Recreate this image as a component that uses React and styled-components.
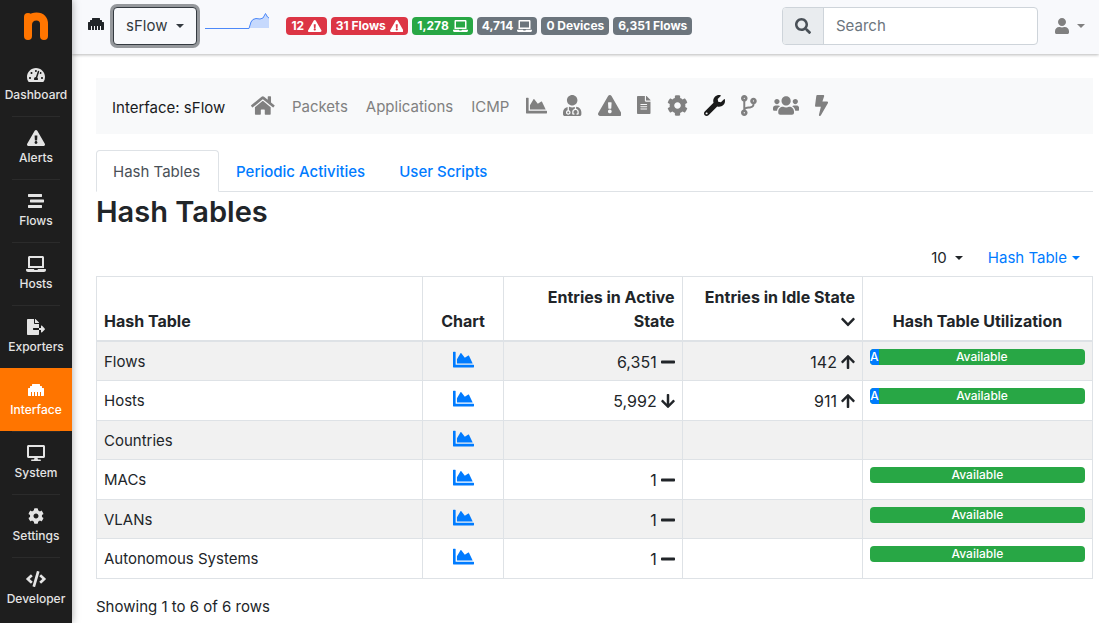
import React from "react";
import styled, { createGlobalStyle, css } from "styled-components";
import {
  FaTachometerAlt, FaExclamationTriangle, FaStream, FaLaptop, FaFileExport,
  FaEthernet, FaDesktop, FaCog, FaCode, FaHome, FaChartArea, FaUserMd,
  FaFileAlt, FaWrench, FaCodeBranch, FaUsers, FaBolt, FaSearch, FaUser,
  FaChevronDown, FaArrowUp, FaArrowDown, FaMinus,
} from "react-icons/fa";

const GlobalStyle = createGlobalStyle`
  *, *::before, *::after { box-sizing: border-box; }
  body {
    margin: 0;
    background: #fff;
    color: #212529;
    font-family: Inter, "Liberation Sans", sans-serif;
    font-size: 16px;
    line-height: 24px;
  }
  a { text-decoration: none; color: inherit; }
  button, input { font: inherit; color: inherit; }
  svg { display: block; }
`;

/* Width of each glyph's view box; all of them are 512 units high. */
const glyphUnits = new Map([
  [FaTachometerAlt, 576], [FaExclamationTriangle, 576], [FaLaptop, 640],
  [FaFileExport, 576], [FaDesktop, 576], [FaCode, 640], [FaHome, 576],
  [FaUserMd, 448], [FaFileAlt, 384], [FaCodeBranch, 384], [FaUsers, 640],
  [FaBolt, 320], [FaUser, 448], [FaChevronDown, 448], [FaArrowUp, 448],
  [FaArrowDown, 448], [FaMinus, 448],
]);

const Glyph = styled.svg`
  flex: none;
  height: ${(p) => p.$size}px;
  width: auto;
  aspect-ratio: ${(p) => p.$units} / 512;
`;

function Icon({ of, size = 16 }) {
  return <Glyph as={of} $size={size} $units={glyphUnits.get(of) || 512} />;
}

const Page = styled.div`
  display: flex;
  min-height: 100vh;
`;

const Sidebar = styled.nav`
  position: sticky;
  top: 0;
  z-index: 2;
  flex: none;
  width: 72px;
  height: 100vh;
  overflow: hidden;
  background: #1e1e1e;
  box-shadow: 0 0 8px rgba(0, 0, 0, 0.35);
`;

const Brand = styled.a`
  display: flex;
  justify-content: center;
  padding-top: 11px;
  height: 53px;
`;

const SideLink = styled.a`
  display: flex;
  flex-direction: column;
  align-items: center;
  height: 63px;
  font-size: 12px;
  line-height: 18px;
  font-weight: 500;
  color: ${(p) => (p.$active ? "#fff" : "#e4e4e4")};
  background: ${(p) => (p.$active ? "#ff7500" : "transparent")};

  &::before {
    content: "";
    width: 48px;
    height: 1px;
    margin-bottom: 13px;
    background: ${(p) => (p.$active ? "transparent" : "#2b2b2b")};
  }
  ${Brand} + &::before { background: transparent; }
  svg { margin-bottom: 3px; }
`;

const Main = styled.div`
  flex: 1;
  min-width: 0;
`;

const TopBar = styled.header`
  display: flex;
  align-items: center;
  height: 54px;
  padding: 0 14px 2px 16px;
  background: #f8f9fc;
  box-shadow: 0 1px 3px rgba(0, 0, 0, 0.28);
  > svg { flex: none; }
`;

const InterfaceMark = styled.span`
  flex: none;
  padding-bottom: 4px;
`;

const Caret = styled.span`
  display: inline-block;
  border: 4px solid transparent;
  border-top-color: currentColor;
  border-bottom: 0;
`;

const InterfaceButton = styled.button`
  display: flex;
  align-items: center;
  gap: 9px;
  height: 38px;
  margin: 0 8px 0 9px;
  padding: 0 12px;
  color: #343a40;
  background: #f8f9fc;
  border: 1px solid #343a40;
  border-radius: 4px;
  box-shadow: 0 0 0 3px #95989c;
  font-size: 15px;
`;

const Badges = styled.div`
  display: flex;
  gap: 4px;
  margin-left: 17px;
`;

const tones = { red: "#dc3545", green: "#28a745", grey: "#6c757d" };

const Badge = styled.a`
  display: flex;
  align-items: center;
  gap: 4px;
  height: 18px;
  padding: 0 5px;
  border-radius: 4px;
  font-size: 12px;
  line-height: 18px;
  font-weight: 700;
  white-space: nowrap;
  color: #fff;
  background: ${(p) => tones[p.$tone]};
`;

const SearchGroup = styled.label`
  display: flex;
  width: 256px;
  height: 38px;
  margin-left: auto;
  border: 1px solid #ced4da;
  border-radius: 4px;
  overflow: hidden;
  background: #fff;
`;

const SearchAddon = styled.span`
  display: flex;
  flex: none;
  align-items: center;
  justify-content: center;
  width: 41px;
  background: #e9ecef;
  color: #495057;
  border-right: 1px solid #ced4da;
`;

const SearchInput = styled.input`
  flex: 1;
  min-width: 0;
  padding: 0 12px;
  border: 0;
  outline: 0;
  background: transparent;
  font-size: 15px;
  &::placeholder { color: #6c757d; opacity: 1; }
`;

const UserButton = styled.button`
  display: flex;
  align-items: center;
  gap: 8px;
  margin-left: 17px;
  padding: 0;
  border: 0;
  background: none;
  color: #808080;
`;

const Content = styled.main`
  padding: 24px 6px 0 24px;
  font-size: 15px;
`;

const InterfaceNav = styled.nav`
  display: flex;
  align-items: center;
  gap: 16px;
  height: 56px;
  padding: 0 16px 2px;
  background: #f8f9fa;
`;

const NavTitle = styled.span`
  padding-top: 6px;
  margin-right: 10px;
  color: #1a1c1e;
  white-space: nowrap;
`;

const NavItem = styled.a`
  color: ${(p) => (p.$active ? "#1a1a1a" : "#808080")};
`;

const NavLabel = styled(NavItem)`
  padding: 3px 1px 0;
`;

const Tabs = styled.div`
  display: flex;
  margin-top: 16px;
  border-bottom: 1px solid #dee2e6;
`;

const Tab = styled.a`
  height: 42px;
  margin-bottom: -1px;
  padding: 9px 16px 7px;
  border: 1px solid transparent;
  border-radius: 4px 4px 0 0;
  color: #007bff;
  font-weight: 500;
  ${(p) =>
    p.$active &&
    css`
      padding-right: 18px;
      color: #495057;
      font-weight: 400;
      background: #fff;
      border-color: #dee2e6 #dee2e6 #fff;
    `}
`;

const Title = styled.h2`
  margin: 0;
  font-size: 29px;
  line-height: 40px;
  font-weight: 600;
`;

const TableTools = styled.div`
  display: flex;
  justify-content: flex-end;
  gap: 25px;
  margin: 14px 0 6px;
  padding-right: 13px;
`;

const ToolButton = styled.button`
  display: flex;
  align-items: center;
  gap: ${(p) => (p.$link ? "5px" : "8px")};
  padding: 0;
  border: 0;
  background: none;
  color: ${(p) => (p.$link ? "#007bff" : "#212529")};
`;

const Table = styled.table`
  width: 100%;
  table-layout: fixed;
  border-collapse: collapse;
  border: 1px solid #dee2e6;
`;

const Col = styled.col`
  width: ${(p) => p.$share}%;
`;

const Head = styled.th`
  padding: 8px 7px 7px;
  border: 1px solid #dee2e6;
  border-bottom-width: 2px;
  vertical-align: bottom;
  font-size: 16px;
  font-weight: 700;
  text-align: ${(p) => p.$align || "left"};
  svg {
    display: inline-block;
    vertical-align: -3px;
  }
`;

const Row = styled.tr`
  height: 39px;
  &:nth-child(odd) { background: #f1f1f1; }
  &:nth-child(even) { height: 40px; }
`;

const Cell = styled.td`
  padding: 8px 7px 6px;
  border: 1px solid #dee2e6;
  vertical-align: top;
`;

const GraphicCell = styled(Cell)`
  padding: 7px;
`;

const ChartLink = styled.a`
  display: flex;
  justify-content: center;
  color: #007bff;
`;

const Count = styled.span`
  display: flex;
  justify-content: flex-end;
  align-items: center;
  gap: 4px;
  font-size: 16px;
`;

const Progress = styled.div`
  display: flex;
  height: 16px;
  border-radius: 4px;
  overflow: hidden;
  background: #28a745;
  color: #fff;
  font-size: 12px;
  line-height: 16px;
  font-weight: 500;
  text-align: center;
`;

const Used = styled.span`
  flex: none;
  background: #007bff;
`;

const Available = styled.span`
  flex: 1;
`;

const Summary = styled.p`
  margin: 16px 0 0;
`;

const sideItems = [
  ["Dashboard", FaTachometerAlt],
  ["Alerts", FaExclamationTriangle],
  ["Flows", FaStream],
  ["Hosts", FaLaptop],
  ["Exporters", FaFileExport],
  ["Interface", FaEthernet],
  ["System", FaDesktop],
  ["Settings", FaCog],
  ["Developer", FaCode],
];

const navIcons = [
  ["Charts", FaChartArea],
  ["Health", FaUserMd],
  ["Alerts", FaExclamationTriangle],
  ["Report", FaFileAlt, 18],
  ["Settings", FaCog],
  ["Internals", FaWrench],
  ["Disaggregation", FaCodeBranch],
  ["Pools", FaUsers],
  ["Traffic", FaBolt],
];

const rows = [
  { name: "Flows", active: "6,351", trend: FaMinus, idle: "142", used: 4 },
  { name: "Hosts", active: "5,992", trend: FaArrowDown, idle: "911", used: 4.3 },
  { name: "Countries" },
  { name: "MACs", active: "1", trend: FaMinus, used: 0 },
  { name: "VLANs", active: "1", trend: FaMinus, used: 0 },
  { name: "Autonomous Systems", active: "1", trend: FaMinus, used: 0 },
];

function Logo() {
  return (
    <svg width="26" height="30" viewBox="0 0 26 30" fill="none" stroke="#ff7500" strokeWidth="8" strokeLinecap="round">
      <path d="M5 6V25" />
      <path d="M5 14C5 8 9 5.500 13.500 5.500C18.500 5.500 21 8.500 21 13V25" />
    </svg>
  );
}

function Sparkline() {
  return (
    <svg width="64" height="32" viewBox="0 0 64 32">
      <path d="M44 18L46 11L48 9L51 8.500L55 9L58 8L60.500 3.500L62.500 7L64 8V18Z" fill="#c6d9fd" />
      <path d="M0 18.500H44L46 12L48 9.500L51 8.500L55 9L58 8L60.500 3.500L62.500 7L64 8" fill="none" stroke="#4d89f9" />
    </svg>
  );
}

function Counter({ value, trend }) {
  return value ? <Count>{value}<Icon of={trend} /></Count> : null;
}

export default function App() {
  return (
    <>
      <GlobalStyle />
      <Page>
        <Sidebar>
          <Brand href="#" aria-label="Home"><Logo /></Brand>
          {sideItems.map(([label, icon]) => (
            <SideLink href="#" key={label} $active={label === "Interface"}>
              <Icon of={icon} />{label}
            </SideLink>
          ))}
        </Sidebar>
        <Main>
          <TopBar>
            <InterfaceMark><Icon of={FaEthernet} /></InterfaceMark>
            <InterfaceButton>sFlow <Caret /></InterfaceButton>
            <Sparkline />
            <Badges>
              <Badge href="#" $tone="red">12 <Icon of={FaExclamationTriangle} size={12} /></Badge>
              <Badge href="#" $tone="red">31 Flows <Icon of={FaExclamationTriangle} size={12} /></Badge>
              <Badge href="#" $tone="green">1,278 <Icon of={FaLaptop} size={12} /></Badge>
              <Badge href="#" $tone="grey">4,714 <Icon of={FaLaptop} size={12} /></Badge>
              <Badge href="#" $tone="grey">0 Devices</Badge>
              <Badge href="#" $tone="grey">6,351 Flows</Badge>
            </Badges>
            <SearchGroup>
              <SearchAddon><Icon of={FaSearch} /></SearchAddon>
              <SearchInput type="text" placeholder="Search" aria-label="Search" />
            </SearchGroup>
            <UserButton aria-label="User menu"><Icon of={FaUser} /><Caret /></UserButton>
          </TopBar>
          <Content>
            <InterfaceNav>
              <NavTitle>Interface: sFlow</NavTitle>
              <NavItem href="#" aria-label="Home"><Icon of={FaHome} size={21} /></NavItem>
              <NavLabel href="#">Packets</NavLabel>
              <NavLabel href="#">Applications</NavLabel>
              <NavLabel href="#">ICMP</NavLabel>
              {navIcons.map(([label, icon, size = 21]) => (
                <NavItem href="#" key={label} aria-label={label} $active={label === "Internals"}>
                  <Icon of={icon} size={size} />
                </NavItem>
              ))}
            </InterfaceNav>
            <Tabs>
              <Tab href="#" $active>Hash Tables</Tab>
              <Tab href="#">Periodic Activities</Tab>
              <Tab href="#">User Scripts</Tab>
            </Tabs>
            <Title>Hash Tables</Title>
            <TableTools>
              <ToolButton>10 <Caret /></ToolButton>
              <ToolButton $link>Hash Table <Caret /></ToolButton>
            </TableTools>
            <Table>
              <colgroup>
                <Col $share={32.7} /><Col $share={8.2} /><Col $share={17.9} /><Col $share={18.1} /><Col $share={23.1} />
              </colgroup>
              <thead>
                <tr>
                  <Head>Hash Table</Head>
                  <Head $align="center">Chart</Head>
                  <Head $align="right">Entries in Active State</Head>
                  <Head $align="right">Entries in Idle State <Icon of={FaChevronDown} /></Head>
                  <Head $align="center">Hash Table Utilization</Head>
                </tr>
              </thead>
              <tbody>
                {rows.map((r) => (
                  <Row key={r.name}>
                    <Cell>{r.name}</Cell>
                    <GraphicCell>
                      <ChartLink href="#" aria-label={`${r.name} chart`}><Icon of={FaChartArea} size={21} /></ChartLink>
                    </GraphicCell>
                    <Cell><Counter value={r.active} trend={r.trend} /></Cell>
                    <Cell><Counter value={r.idle} trend={FaArrowUp} /></Cell>
                    <GraphicCell>
                      {r.used !== undefined && (
                        <Progress>
                          {r.used > 0 && <Used style={{ width: `${r.used}%` }}>A</Used>}
                          <Available>Available</Available>
                        </Progress>
                      )}
                    </GraphicCell>
                  </Row>
                ))}
              </tbody>
            </Table>
            <Summary>Showing 1 to 6 of 6 rows</Summary>
          </Content>
        </Main>
      </Page>
    </>
  );
}
